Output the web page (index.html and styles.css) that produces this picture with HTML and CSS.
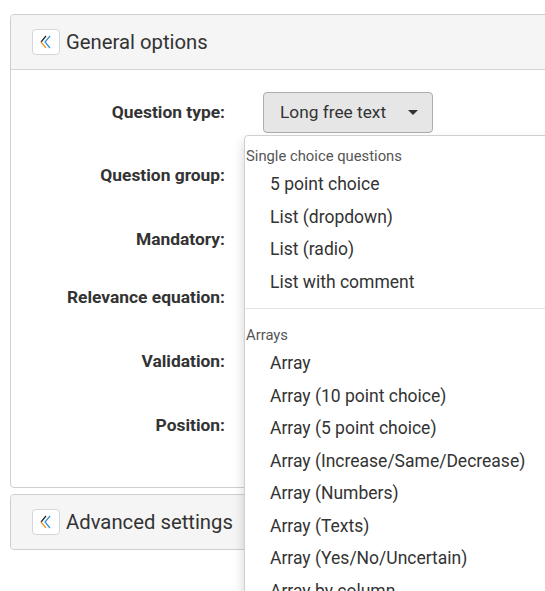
FILE: index.html
```html
<!DOCTYPE html>
<html>
<head>
<meta charset="utf-8">
<link rel="stylesheet" href="styles.css">
</head>
<body>
<div class="page">
  <section class="panel">
    <header class="panel-head">
      <span class="toggle">
        <svg width="14" height="16" viewBox="0 0 14 16">
          <polyline points="7,2 2,8" fill="none" stroke="#222" stroke-width="1.2"/>
          <polyline points="2,8 7,14" fill="none" stroke="#f0962c" stroke-width="1.2"/>
          <polyline points="11,2 6,8 11,14" fill="none" stroke="#2f8fd8" stroke-width="1.2"/>
        </svg>
      </span>
      <h2 class="panel-title">General options</h2>
    </header>
    <div class="panel-body">
      <div class="row">
        <label class="label">Question type:</label>
        <div class="control">
          <button class="select-btn">Long free text <span class="caret"></span></button>
        </div>
      </div>
      <div class="row row-2"><label class="label">Question group:</label></div>
      <div class="row row-3"><label class="label">Mandatory:</label></div>
      <div class="row row-4"><label class="label">Relevance equation:</label></div>
      <div class="row row-5"><label class="label">Validation:</label></div>
      <div class="row row-6"><label class="label">Position:</label></div>
    </div>
  </section>
  <section class="panel panel-collapsed">
    <header class="panel-head panel-head-only">
      <span class="toggle">
        <svg width="14" height="16" viewBox="0 0 14 16">
          <polyline points="7,2 2,8" fill="none" stroke="#222" stroke-width="1.2"/>
          <polyline points="2,8 7,14" fill="none" stroke="#f0962c" stroke-width="1.2"/>
          <polyline points="11,2 6,8 11,14" fill="none" stroke="#2f8fd8" stroke-width="1.2"/>
        </svg>
      </span>
      <h2 class="panel-title">Advanced settings</h2>
    </header>
  </section>
  <ul class="menu">
    <li class="menu-header">Single choice questions</li>
    <li class="menu-item">5 point choice</li>
    <li class="menu-item">List (dropdown)</li>
    <li class="menu-item">List (radio)</li>
    <li class="menu-item">List with comment</li>
    <li class="menu-divider"></li>
    <li class="menu-header">Arrays</li>
    <li class="menu-item">Array</li>
    <li class="menu-item">Array (10 point choice)</li>
    <li class="menu-item">Array (5 point choice)</li>
    <li class="menu-item">Array (Increase/Same/Decrease)</li>
    <li class="menu-item">Array (Numbers)</li>
    <li class="menu-item">Array (Texts)</li>
    <li class="menu-item">Array (Yes/No/Uncertain)</li>
    <li class="menu-item">Array by column</li>
  </ul>
</div>
</body>
</html>
```

FILE: styles.css
```css
html, body {
  margin: 0;
  padding: 0;
  background: #fff;
  overflow: hidden;
  width: 545px;
  height: 591px;
}
body {
  font-family: Roboto, "Liberation Sans", Arial, sans-serif;
  color: #333;
}
.page {
  position: relative;
  padding: 14px 0 0 10px;
  width: 700px;
}
.panel {
  width: 600px;
  border: 1px solid #cfcfcf;
  border-radius: 4px;
  background: #fff;
  box-sizing: border-box;
}
.panel-collapsed {
  margin-top: 6px;
}
.panel-head {
  display: flex;
  align-items: center;
  height: 55px;
  box-sizing: border-box;
  padding-left: 21px;
  background: #f5f5f5;
  border-bottom: 1px solid #d2d2d2;
  border-radius: 4px 4px 0 0;
}
.panel-head-only {
  border-bottom: none;
  border-radius: 4px;
  height: 54px;
}
.toggle {
  width: 28px;
  height: 26px;
  box-sizing: border-box;
  border: 1px solid #d6d6d6;
  border-radius: 4px;
  background: #fff;
  display: flex;
  align-items: center;
  justify-content: center;
  margin-right: 6px;
}
.panel-title {
  margin: 0;
  font-size: 20.3px;
  font-weight: 400;
  color: #333;
}
.panel-body {
  padding: 20px 0 40px 0;
  display: flex;
  flex-direction: column;
}
.row {
  display: flex;
  align-items: center;
  height: 44px;
}
.row-2 { margin-top: 19px; }
.row-3 { margin-top: 20px; }
.row-4 { margin-top: 14px; }
.row-5 { margin-top: 20px; }
.row-6 { margin-top: 20px; }
.label {
  width: 214px;
  text-align: right;
  font-weight: 700;
  font-size: 17.4px;
  color: #333;
}
.control {
  margin-left: 38px;
}
.select-btn {
  height: 41px;
  width: 170px;
  box-sizing: border-box;
  border: 1px solid #adadad;
  border-radius: 4px;
  background: #e6e6e6;
  font-family: Roboto, "Liberation Sans", Arial, sans-serif;
  font-size: 17.3px;
  color: #333;
  padding: 0 0 0 16px;
  display: flex;
  align-items: center;
  text-align: left;
}
.caret {
  display: inline-block;
  margin-left: 22px;
  width: 0;
  height: 0;
  border-left: 5px solid transparent;
  border-right: 5px solid transparent;
  border-top: 5px solid #333;
}
.menu {
  position: absolute;
  left: 244px;
  top: 135px;
  width: 320px;
  margin: 0;
  padding: 5px 0 0 0;
  list-style: none;
  background: #fff;
  border: 1px solid #d0d0d0;
  border-radius: 4px;
  box-shadow: 0 6px 12px rgba(0,0,0,0.175);
}
.menu-header {
  font-size: 14.8px;
  line-height: 20px;
  color: #555;
  padding: 5px 0 2px 1px;
}
.menu-item {
  font-size: 17.5px;
  line-height: 32.5px;
  height: 32.5px;
  padding-left: 25px;
  color: #333;
  white-space: nowrap;
}
.menu-divider {
  height: 1px;
  background: #e5e5e5;
  margin: 10px 0;
}
.menu-divider + .menu-header {
  padding-top: 6px;
}
```
